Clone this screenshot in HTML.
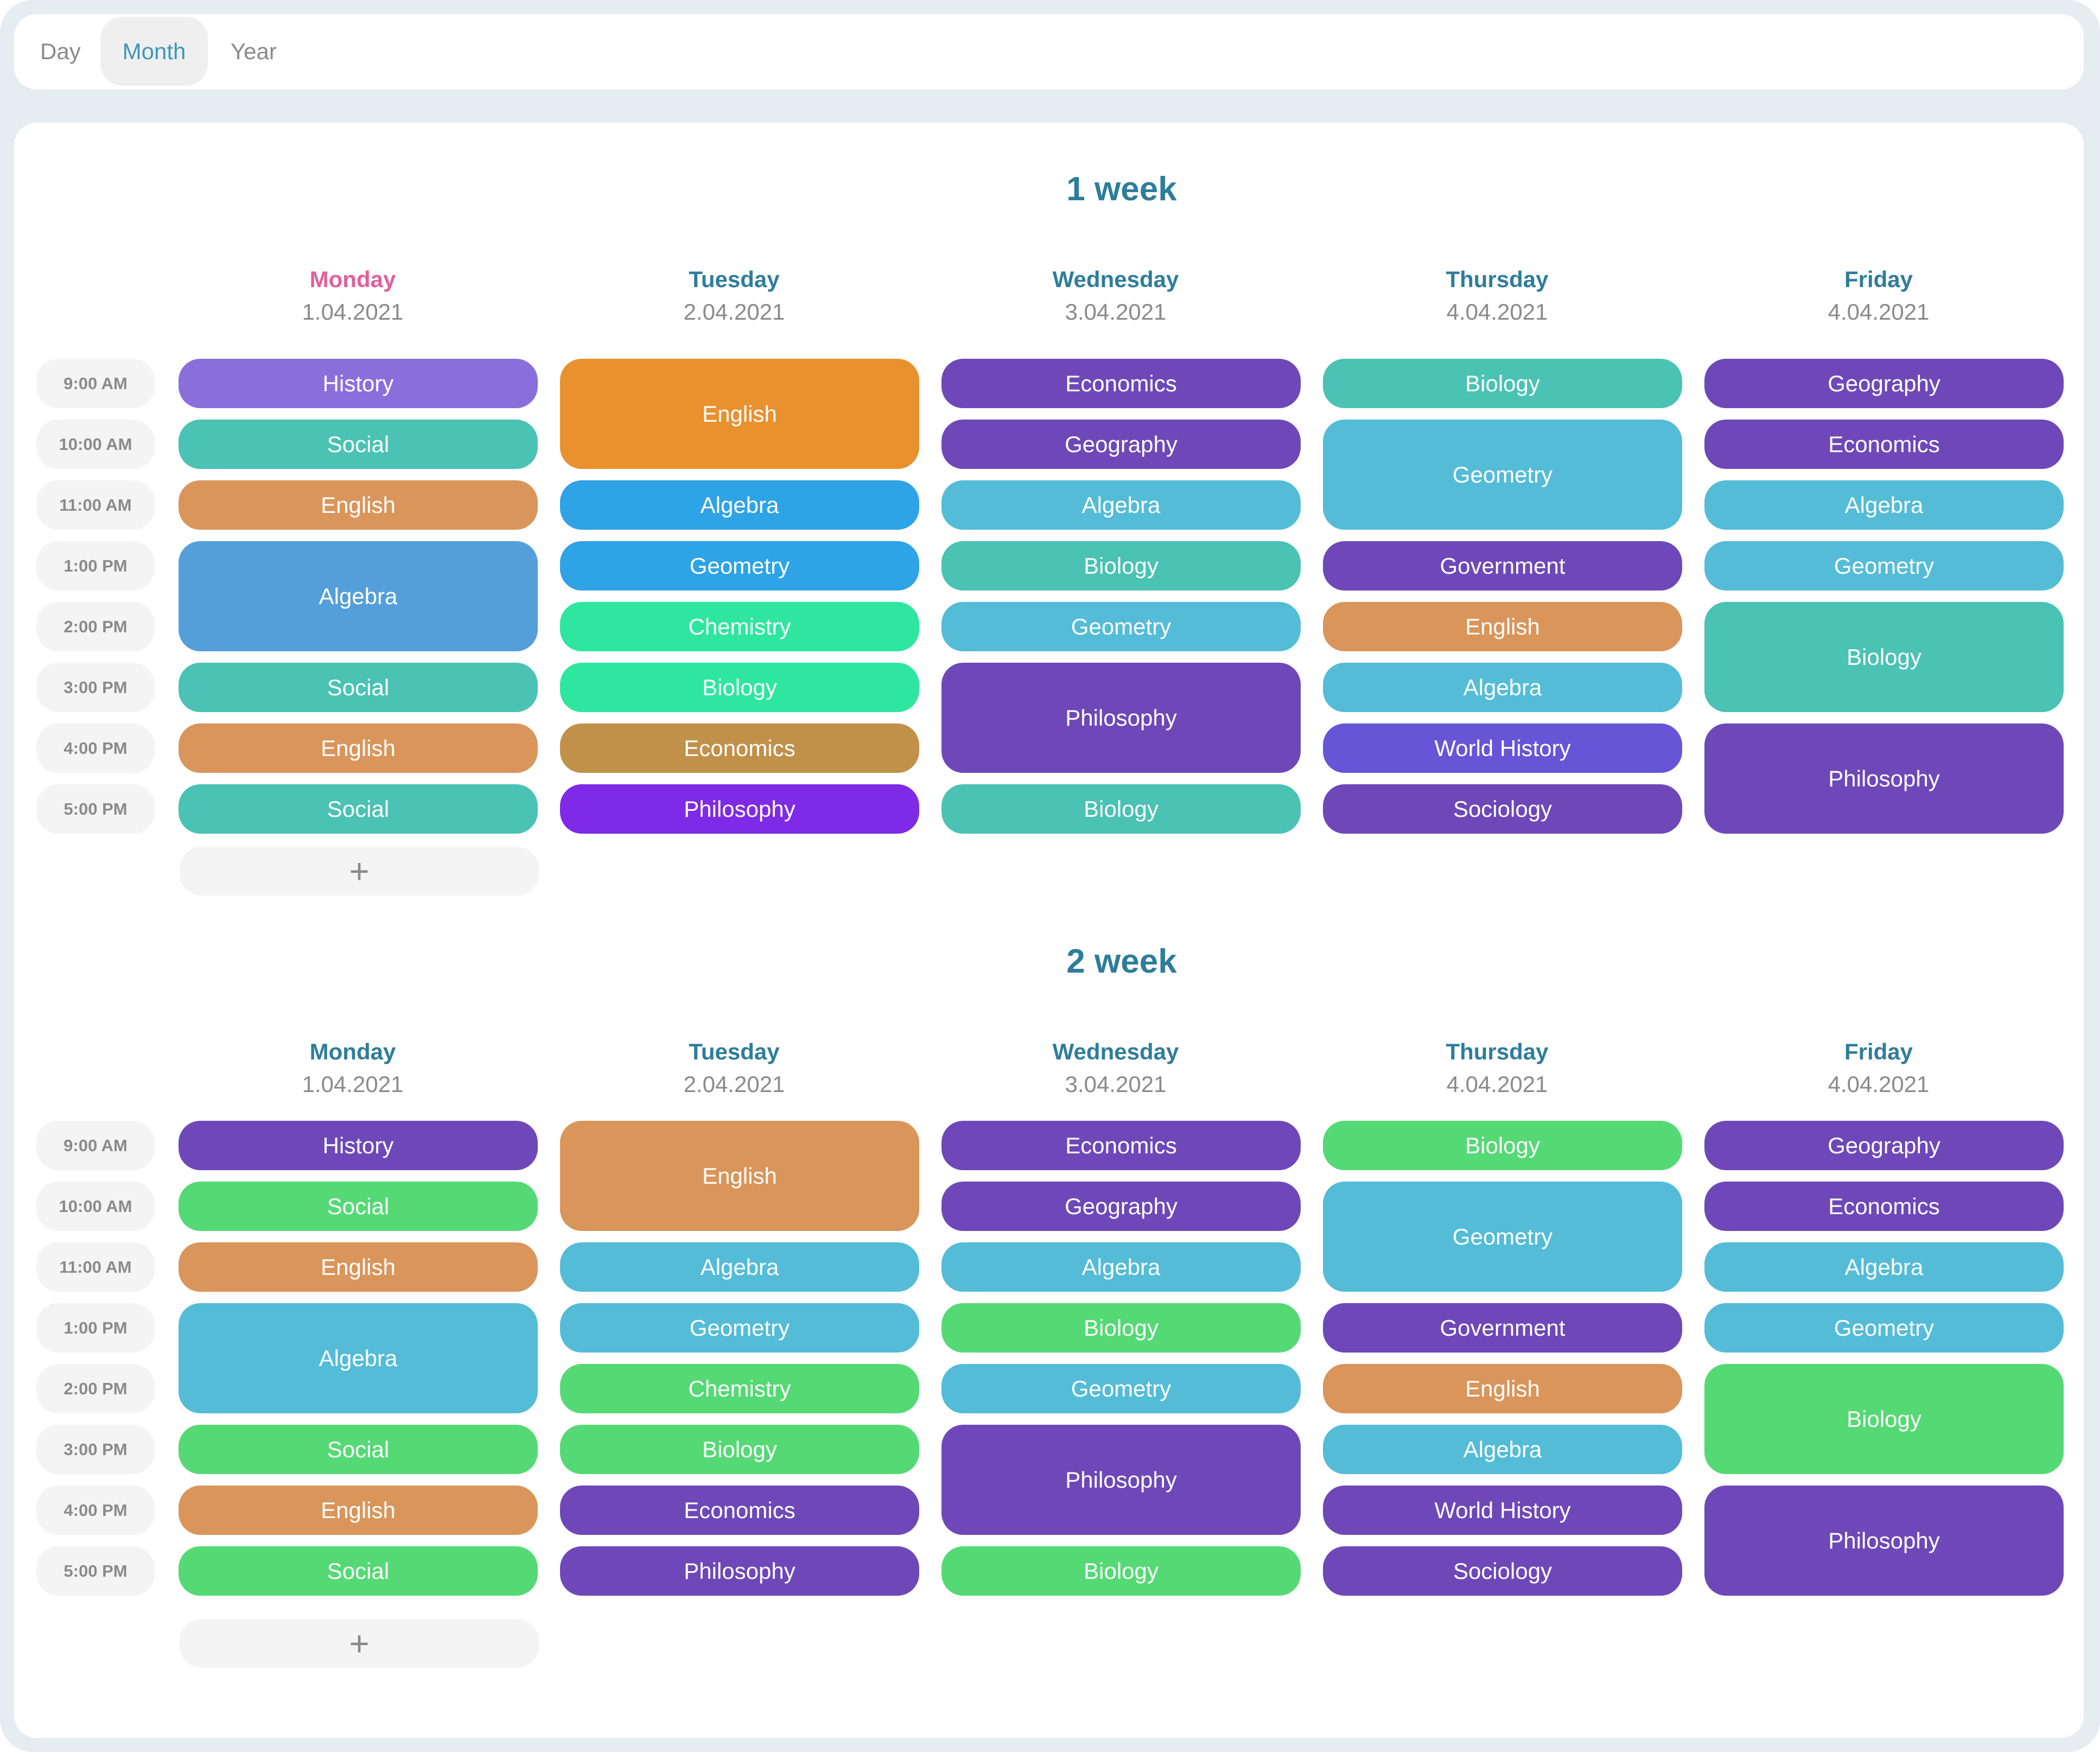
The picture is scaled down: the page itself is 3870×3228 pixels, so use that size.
<!DOCTYPE html>
<html><head><meta charset="utf-8"><style>
*{box-sizing:border-box;margin:0;padding:0}
body{width:3870px;height:3228px;background:#fff;font-family:"Liberation Sans",Arial,sans-serif;position:relative;overflow:hidden}
.frame{position:absolute;left:0;top:0;width:3870px;height:3228px;background:#e6edf0;border-radius:60px}
.tabs{position:absolute;left:26px;top:26px;width:3814px;height:139px;background:#fff;border-radius:42px}
.tab{position:absolute;top:5px;height:127px;line-height:127px;font-size:42px;color:#8a8a8a}
.tab.on{background:#efefef;border-radius:40px;color:#3d98b8;width:198px;text-align:center}
.card{position:absolute;left:26px;top:226px;width:3814px;height:2976px;background:#fff;border-radius:42px}
.title{position:absolute;left:1667px;width:800px;text-align:center;font-size:62px;font-weight:bold;color:#2e7d9a;line-height:80px}
.hdr{position:absolute;width:662px;text-align:center;margin-left:-10px}
.dn{font-size:42px;font-weight:bold;color:#2e7d9a;line-height:56px}
.dn.pink{color:#e0609a}
.dd{font-size:42px;color:#8a8a8a;line-height:56px;margin-top:4px}
.grid{position:absolute;left:67px;display:grid;grid-template-columns:221px repeat(5,662px);column-gap:41px;grid-template-rows:repeat(8,91px);row-gap:21px}
.t{width:218px;background:#f4f4f4;border-radius:40px;display:flex;align-items:center;justify-content:center;font-size:31px;font-weight:bold;color:#8a8a8a}
.e{border-radius:40px;display:flex;align-items:center;justify-content:center;font-size:42px;color:#fff}
.pu{background:#6e48b8}.lp{background:#8a6fdb}.te{background:#4ac2b4}.ta{background:#d9955a}.ab{background:#549fd9}
.or{background:#e8912e}.bl{background:#2ea3e6}.mi{background:#2ee6a0}.br{background:#c1914a}.vi{background:#7e2ae6}
.lb{background:#54bcd6}.wh{background:#6655d6}.gr{background:#55d975}
.plus{position:absolute;left:331px;width:662px;height:90px;background:#f4f4f4;border-radius:40px;display:flex;align-items:center;justify-content:center;font-size:64px;color:#8a8a8a;font-weight:300}
</style></head><body>
<div class="frame"></div>
<div class="tabs">
<div class="tab" style="left:48px">Day</div>
<div class="tab on" style="left:159px">Month</div>
<div class="tab" style="left:399px">Year</div>
</div>
<div class="card"></div>

<div class="title" style="top:309px">1 week</div>
<div class="hdr" style="left:329px;top:487px"><div class="dn pink">Monday</div><div class="dd">1.04.2021</div></div>
<div class="hdr" style="left:1032px;top:487px"><div class="dn">Tuesday</div><div class="dd">2.04.2021</div></div>
<div class="hdr" style="left:1735px;top:487px"><div class="dn">Wednesday</div><div class="dd">3.04.2021</div></div>
<div class="hdr" style="left:2438px;top:487px"><div class="dn">Thursday</div><div class="dd">4.04.2021</div></div>
<div class="hdr" style="left:3141px;top:487px"><div class="dn">Friday</div><div class="dd">4.04.2021</div></div>

<div class="grid" style="top:661px">
<div class="t" style="grid-column:1;grid-row:1">9:00 AM</div>
<div class="t" style="grid-column:1;grid-row:2">10:00 AM</div>
<div class="t" style="grid-column:1;grid-row:3">11:00 AM</div>
<div class="t" style="grid-column:1;grid-row:4">1:00 PM</div>
<div class="t" style="grid-column:1;grid-row:5">2:00 PM</div>
<div class="t" style="grid-column:1;grid-row:6">3:00 PM</div>
<div class="t" style="grid-column:1;grid-row:7">4:00 PM</div>
<div class="t" style="grid-column:1;grid-row:8">5:00 PM</div>

<div class="e lp" style="grid-column:2;grid-row:1">History</div>
<div class="e te" style="grid-column:2;grid-row:2">Social</div>
<div class="e ta" style="grid-column:2;grid-row:3">English</div>
<div class="e ab" style="grid-column:2;grid-row:4/6">Algebra</div>
<div class="e te" style="grid-column:2;grid-row:6">Social</div>
<div class="e ta" style="grid-column:2;grid-row:7">English</div>
<div class="e te" style="grid-column:2;grid-row:8">Social</div>

<div class="e or" style="grid-column:3;grid-row:1/3">English</div>
<div class="e bl" style="grid-column:3;grid-row:3">Algebra</div>
<div class="e bl" style="grid-column:3;grid-row:4">Geometry</div>
<div class="e mi" style="grid-column:3;grid-row:5">Chemistry</div>
<div class="e mi" style="grid-column:3;grid-row:6">Biology</div>
<div class="e br" style="grid-column:3;grid-row:7">Economics</div>
<div class="e vi" style="grid-column:3;grid-row:8">Philosophy</div>

<div class="e pu" style="grid-column:4;grid-row:1">Economics</div>
<div class="e pu" style="grid-column:4;grid-row:2">Geography</div>
<div class="e lb" style="grid-column:4;grid-row:3">Algebra</div>
<div class="e te" style="grid-column:4;grid-row:4">Biology</div>
<div class="e lb" style="grid-column:4;grid-row:5">Geometry</div>
<div class="e pu" style="grid-column:4;grid-row:6/8">Philosophy</div>
<div class="e te" style="grid-column:4;grid-row:8">Biology</div>

<div class="e te" style="grid-column:5;grid-row:1">Biology</div>
<div class="e lb" style="grid-column:5;grid-row:2/4">Geometry</div>
<div class="e pu" style="grid-column:5;grid-row:4">Government</div>
<div class="e ta" style="grid-column:5;grid-row:5">English</div>
<div class="e lb" style="grid-column:5;grid-row:6">Algebra</div>
<div class="e wh" style="grid-column:5;grid-row:7">World History</div>
<div class="e pu" style="grid-column:5;grid-row:8">Sociology</div>

<div class="e pu" style="grid-column:6;grid-row:1">Geography</div>
<div class="e pu" style="grid-column:6;grid-row:2">Economics</div>
<div class="e lb" style="grid-column:6;grid-row:3">Algebra</div>
<div class="e lb" style="grid-column:6;grid-row:4">Geometry</div>
<div class="e te" style="grid-column:6;grid-row:5/7">Biology</div>
<div class="e pu" style="grid-column:6;grid-row:7/9">Philosophy</div>
</div>
<div class="plus" style="top:1560px">+</div>

<div class="title" style="top:1732px">2 week</div>
<div class="hdr" style="left:329px;top:1910px"><div class="dn">Monday</div><div class="dd">1.04.2021</div></div>
<div class="hdr" style="left:1032px;top:1910px"><div class="dn">Tuesday</div><div class="dd">2.04.2021</div></div>
<div class="hdr" style="left:1735px;top:1910px"><div class="dn">Wednesday</div><div class="dd">3.04.2021</div></div>
<div class="hdr" style="left:2438px;top:1910px"><div class="dn">Thursday</div><div class="dd">4.04.2021</div></div>
<div class="hdr" style="left:3141px;top:1910px"><div class="dn">Friday</div><div class="dd">4.04.2021</div></div>

<div class="grid" style="top:2065px">
<div class="t" style="grid-column:1;grid-row:1">9:00 AM</div>
<div class="t" style="grid-column:1;grid-row:2">10:00 AM</div>
<div class="t" style="grid-column:1;grid-row:3">11:00 AM</div>
<div class="t" style="grid-column:1;grid-row:4">1:00 PM</div>
<div class="t" style="grid-column:1;grid-row:5">2:00 PM</div>
<div class="t" style="grid-column:1;grid-row:6">3:00 PM</div>
<div class="t" style="grid-column:1;grid-row:7">4:00 PM</div>
<div class="t" style="grid-column:1;grid-row:8">5:00 PM</div>

<div class="e pu" style="grid-column:2;grid-row:1">History</div>
<div class="e gr" style="grid-column:2;grid-row:2">Social</div>
<div class="e ta" style="grid-column:2;grid-row:3">English</div>
<div class="e lb" style="grid-column:2;grid-row:4/6">Algebra</div>
<div class="e gr" style="grid-column:2;grid-row:6">Social</div>
<div class="e ta" style="grid-column:2;grid-row:7">English</div>
<div class="e gr" style="grid-column:2;grid-row:8">Social</div>

<div class="e ta" style="grid-column:3;grid-row:1/3">English</div>
<div class="e lb" style="grid-column:3;grid-row:3">Algebra</div>
<div class="e lb" style="grid-column:3;grid-row:4">Geometry</div>
<div class="e gr" style="grid-column:3;grid-row:5">Chemistry</div>
<div class="e gr" style="grid-column:3;grid-row:6">Biology</div>
<div class="e pu" style="grid-column:3;grid-row:7">Economics</div>
<div class="e pu" style="grid-column:3;grid-row:8">Philosophy</div>

<div class="e pu" style="grid-column:4;grid-row:1">Economics</div>
<div class="e pu" style="grid-column:4;grid-row:2">Geography</div>
<div class="e lb" style="grid-column:4;grid-row:3">Algebra</div>
<div class="e gr" style="grid-column:4;grid-row:4">Biology</div>
<div class="e lb" style="grid-column:4;grid-row:5">Geometry</div>
<div class="e pu" style="grid-column:4;grid-row:6/8">Philosophy</div>
<div class="e gr" style="grid-column:4;grid-row:8">Biology</div>

<div class="e gr" style="grid-column:5;grid-row:1">Biology</div>
<div class="e lb" style="grid-column:5;grid-row:2/4">Geometry</div>
<div class="e pu" style="grid-column:5;grid-row:4">Government</div>
<div class="e ta" style="grid-column:5;grid-row:5">English</div>
<div class="e lb" style="grid-column:5;grid-row:6">Algebra</div>
<div class="e pu" style="grid-column:5;grid-row:7">World History</div>
<div class="e pu" style="grid-column:5;grid-row:8">Sociology</div>

<div class="e pu" style="grid-column:6;grid-row:1">Geography</div>
<div class="e pu" style="grid-column:6;grid-row:2">Economics</div>
<div class="e lb" style="grid-column:6;grid-row:3">Algebra</div>
<div class="e lb" style="grid-column:6;grid-row:4">Geometry</div>
<div class="e gr" style="grid-column:6;grid-row:5/7">Biology</div>
<div class="e pu" style="grid-column:6;grid-row:7/9">Philosophy</div>
</div>
<div class="plus" style="top:2983px">+</div>
</body></html>
